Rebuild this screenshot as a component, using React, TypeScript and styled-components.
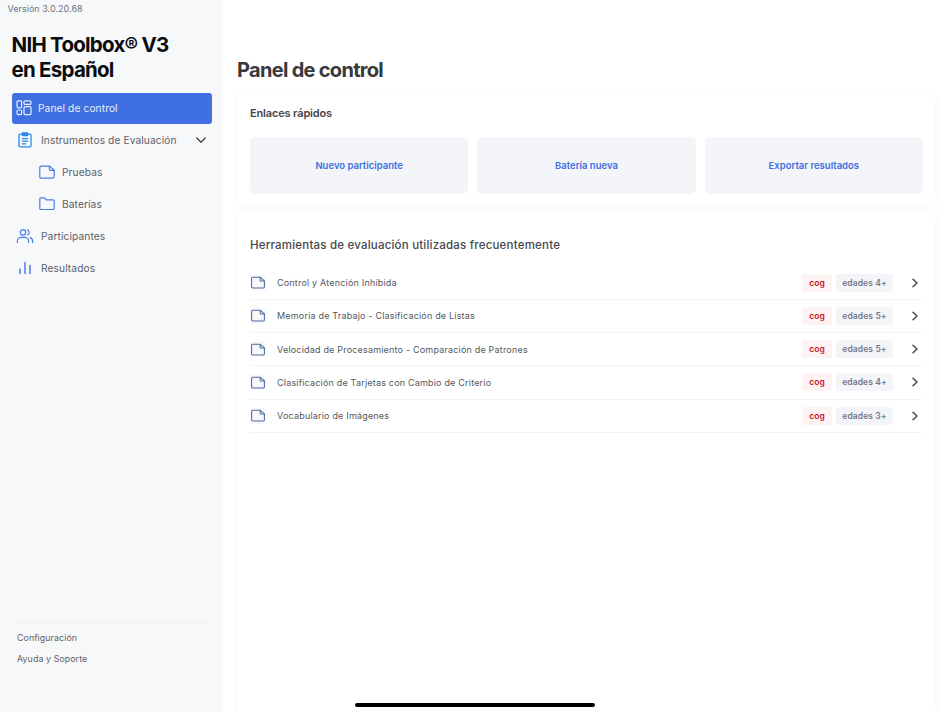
import React from "react";
import styled, { createGlobalStyle } from "styled-components";

const Global = createGlobalStyle`
  html, body { margin: 0; padding: 0; height: 100%; background: #fff; }
  #root { height: 100%; }
  * { box-sizing: border-box; }
  body { font-family: Inter, "Liberation Sans", sans-serif; overflow: hidden; }
`;

const Page = styled.div`
  position: relative;
  display: flex;
  width: 950px;
  height: 712px;
  overflow: hidden;
  background: #fff;
`;

const Sidebar = styled.aside`
  width: 223px;
  height: 712px;
  flex: none;
  display: flex;
  flex-direction: column;
  background: #f7f8fa;
  padding: 3px 11px 0 12px;
`;

const Version = styled.div`
  margin-left: -4.5px;
  font-size: 9px;
  line-height: 12px;
  letter-spacing: 0.02px;
  color: #6f7278;
`;

const Brand = styled.h1`
  margin: 17px 0 10.5px -0.5px;
  font-size: 20.5px;
  line-height: 25px;
  font-weight: 700;
  letter-spacing: -0.75px;
  color: #0b0c0e;
`;

const NavItem = styled.div<{ $active?: boolean; $indent?: boolean }>`
  height: 31.9px;
  flex: none;
  display: flex;
  align-items: center;
  gap: ${(p) => (p.$active ? "5px" : p.$indent ? "6px" : "7px")};
  padding-left: ${(p) => (p.$indent ? "26px" : p.$active ? "3px" : "4px")};
  padding-right: 5px;
  border-radius: 3px;
  background: ${(p) => (p.$active ? "#3f6fe0" : "transparent")};
  color: ${(p) => (p.$active ? "#e9eefb" : "#5d6066")};
  font-size: 10.2px;
  letter-spacing: 0.1px;
  white-space: nowrap;

  svg { flex: none; }
`;

const NavLabel = styled.span`
  flex: 1;
`;

const SidebarFooter = styled.div`
  margin: auto 5px 47.5px 5px;
  padding-top: 8px;
  border-top: 1px solid #eff0f2;
  display: flex;
  flex-direction: column;
  gap: 8px;
`;

const FooterLink = styled.div`
  font-size: 8.8px;
  line-height: 13px;
  letter-spacing: 0.1px;
  color: #5f6268;
`;

const Main = styled.main`
  flex: 1;
  min-width: 0;
  padding: 58px 15px 0 15px;
  display: flex;
  flex-direction: column;
`;

const PageTitle = styled.h2`
  margin: 0 0 12px -1px;
  font-size: 20px;
  line-height: 25px;
  font-weight: 700;
  letter-spacing: -0.7px;
  color: #38393c;
`;

const Card = styled.section`
  background: #fff;
  border-radius: 4px;
  box-shadow: 0 0 8px rgba(20, 30, 50, 0.045);
`;

const QuickCard = styled(Card)`
  height: 110px;
  padding: 11px 12px 12px;
  margin-bottom: 8px;
`;

const QuickTitle = styled.h3`
  margin: 0 0 16px;
  font-size: 11px;
  line-height: 15px;
  font-weight: 600;
  letter-spacing: -0.15px;
  color: #45474b;
`;

const TileRow = styled.div`
  display: grid;
  grid-template-columns: repeat(3, 1fr);
  gap: 9px;
`;

const Tile = styled.div`
  height: 56.5px;
  display: flex;
  align-items: center;
  justify-content: center;
  border-radius: 5px;
  background: #f4f5f9;
  color: #3f6fe0;
  font-size: 9.5px;
  font-weight: 600;
`;

const ToolsCard = styled(Card)`
  flex: 1;
  padding: 24px 12px 0;
  border-radius: 4px 4px 0 0;
`;

const ToolsTitle = styled.h3`
  margin: 0 0 13.4px;
  font-size: 11.5px;
  line-height: 16px;
  font-weight: 500;
  letter-spacing: 0.2px;
  color: #45474b;
`;

const ToolRow = styled.div`
  height: 33.3px;
  display: flex;
  align-items: center;
  border-bottom: 1px solid #f3f3f5;
`;

const ToolIcon = styled.div`
  width: 16px;
  height: 16px;
  margin-right: 11px;
  flex: none;
  display: flex;
  align-items: center;
  justify-content: center;
  background: #f7f8fb;
  border-radius: 2px;
`;

const ToolName = styled.span`
  flex: 1;
  font-size: 9px;
  letter-spacing: 0.19px;
  color: #55575c;
`;

const Badge = styled.span<{ $tone: "red" | "grey" }>`
  height: 18px;
  display: inline-flex;
  align-items: center;
  justify-content: center;
  margin-right: 4px;
  border-radius: 2px;
  font-size: 8.5px;
  letter-spacing: 0.1px;
  font-weight: 600;
  width: ${(p) => (p.$tone === "red" ? "30px" : "57px")};
  background: ${(p) => (p.$tone === "red" ? "#fdf3f3" : "#f4f5f8")};
  color: ${(p) => (p.$tone === "red" ? "#c8141e" : "#75778a")};
`;

const Chevron = styled.span`
  width: 26px;
  display: flex;
  padding-left: 13px;
`;

const HomeBar = styled.div`
  position: absolute;
  left: 355px;
  bottom: 5px;
  width: 240px;
  height: 4px;
  border-radius: 2px;
  background: #000;
`;

const B = "#4a7be6";

const DashIcon = () => (
  <svg width="18" height="18" viewBox="0 0 18 18" fill="none" stroke="#e6ecfb" strokeWidth="1.2">
    <rect x="2" y="1.8" width="4.6" height="7" rx="1" />
    <rect x="9" y="1.8" width="7" height="3.6" rx="1" />
    <rect x="2" y="11" width="4.6" height="4.6" rx="1" />
    <rect x="9" y="7.6" width="7" height="8" rx="1" />
  </svg>
);

const ClipIcon = () => (
  <svg width="18" height="18" viewBox="0 0 18 18" fill="none" stroke="#2f86e8" strokeWidth="1.3">
    <path d="M5.8 3.2H4a1 1 0 0 0-1 1v10.6a1 1 0 0 0 1 1h10a1 1 0 0 0 1-1V4.2a1 1 0 0 0-1-1h-1.8" />
    <rect x="6.2" y="1.8" width="5.6" height="2.8" rx="0.6" fill="#2f86e8" />
    <path d="M5.8 7.6h6.4M5.8 10.2h6.4M5.8 12.8h4.2" />
  </svg>
);

const FileIcon = ({ color = B, size = 18 }: { color?: string; size?: number }) => (
  <svg width={size} height={size} viewBox="0 0 16 16" fill="none" stroke={color} strokeWidth="1.05" strokeLinejoin="round">
    <path d="M1.6 3.9a1.1 1.1 0 0 1 1.1-1.1h7.6l4.1 3.6v5.9a1.1 1.1 0 0 1-1.1 1.1H2.7a1.1 1.1 0 0 1-1.1-1.1z" />
    <path d="M10.2 2.8v3.1a.6.6 0 0 0 .6.6h3.6" />
  </svg>
);

const FolderIcon = () => (
  <svg width="18" height="18" viewBox="0 0 16 16" fill="none" stroke={B} strokeWidth="1.05" strokeLinejoin="round">
    <path d="M1.6 3.6a1 1 0 0 1 1-1h3.2l1.5 1.7h6.1a1 1 0 0 1 1 1v6.6a1 1 0 0 1-1 1H2.6a1 1 0 0 1-1-1z" />
  </svg>
);

const PeopleIcon = () => (
  <svg width="18" height="18" viewBox="0 0 18 18" fill="none" stroke={B} strokeWidth="1.2" strokeLinecap="round">
    <circle cx="7" cy="5.4" r="2.7" />
    <path d="M1.4 15.4v-1.2c0-2.2 1.9-3.8 4-3.8h3.2c2.1 0 4 1.6 4 3.8v1.2" />
    <path d="M11.6 2.9a2.7 2.7 0 0 1 0 5" />
    <path d="M14 10.7c1.5.4 2.6 1.7 2.6 3.4v1.3" />
  </svg>
);

const BarsIcon = () => (
  <svg width="18" height="18" viewBox="0 0 18 18" fill="none" stroke={B} strokeWidth="1.5" strokeLinecap="round">
    <path d="M4 14.6V10M9 14.6V3.4M14 14.6V6.6" />
  </svg>
);

const ChevronDown = () => (
  <svg width="12" height="12" viewBox="0 0 12 12" fill="none" stroke="#45474b" strokeWidth="1.4" strokeLinecap="round" strokeLinejoin="round">
    <path d="M1.8 4l4.2 4.2L10.2 4" />
  </svg>
);

const ChevronRight = () => (
  <svg width="10" height="12" viewBox="0 0 10 12" fill="none" stroke="#45474b" strokeWidth="1.5" strokeLinecap="round" strokeLinejoin="round">
    <path d="M3 2.2L7 6 3 9.8" />
  </svg>
);

const tools = [
  { name: "Control y Atención Inhibida", age: "edades 4+" },
  { name: "Memoria de Trabajo - Clasificación de Listas", age: "edades 5+" },
  { name: "Velocidad de Procesamiento - Comparación de Patrones", age: "edades 5+" },
  { name: "Clasificación de Tarjetas con Cambio de Criterio", age: "edades 4+" },
  { name: "Vocabulario de Imágenes", age: "edades 3+" },
];

export default function App() {
  return (
    <Page>
      <Global />
      <Sidebar>
        <Version>Versión 3.0.20.68</Version>
        <Brand>
          NIH Toolbox® V3
          <br />
          en Español
        </Brand>
        <NavItem $active>
          <DashIcon />
          <NavLabel>Panel de control</NavLabel>
        </NavItem>
        <NavItem>
          <ClipIcon />
          <NavLabel>Instrumentos de Evaluación</NavLabel>
          <ChevronDown />
        </NavItem>
        <NavItem $indent>
          <FileIcon />
          <NavLabel>Pruebas</NavLabel>
        </NavItem>
        <NavItem $indent>
          <FolderIcon />
          <NavLabel>Baterías</NavLabel>
        </NavItem>
        <NavItem>
          <PeopleIcon />
          <NavLabel>Participantes</NavLabel>
        </NavItem>
        <NavItem>
          <BarsIcon />
          <NavLabel>Resultados</NavLabel>
        </NavItem>
        <SidebarFooter>
          <FooterLink>Configuración</FooterLink>
          <FooterLink>Ayuda y Soporte</FooterLink>
        </SidebarFooter>
      </Sidebar>
      <Main>
        <PageTitle>Panel de control</PageTitle>
        <QuickCard>
          <QuickTitle>Enlaces rápidos</QuickTitle>
          <TileRow>
            <Tile>Nuevo participante</Tile>
            <Tile>Batería nueva</Tile>
            <Tile>Exportar resultados</Tile>
          </TileRow>
        </QuickCard>
        <ToolsCard>
          <ToolsTitle>Herramientas de evaluación utilizadas frecuentemente</ToolsTitle>
          {tools.map((t) => (
            <ToolRow key={t.name}>
              <ToolIcon>
                <FileIcon color="#4c6a9c" size={17} />
              </ToolIcon>
              <ToolName>{t.name}</ToolName>
              <Badge $tone="red">cog</Badge>
              <Badge $tone="grey">{t.age}</Badge>
              <Chevron>
                <ChevronRight />
              </Chevron>
            </ToolRow>
          ))}
        </ToolsCard>
      </Main>
      <HomeBar />
    </Page>
  );
}
